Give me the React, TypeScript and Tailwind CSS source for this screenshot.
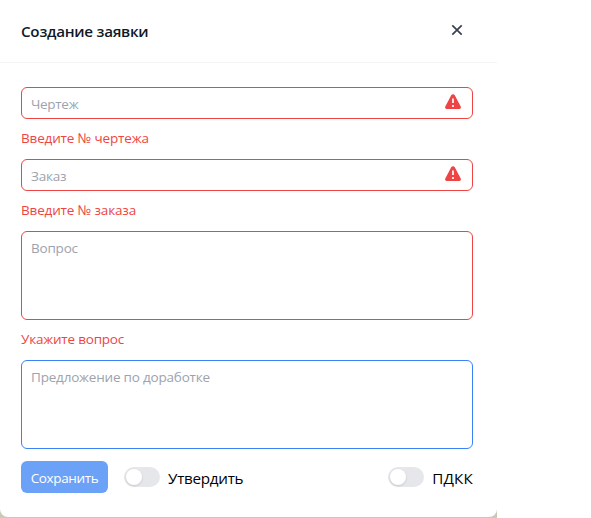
import type { ReactNode } from "react";

function Warning() {
  return (
    <svg viewBox="0 0 16 15" className="mr-[11px] mb-[3px] h-[15px] w-4 shrink-0" aria-hidden="true">
      <path
        d="M6.2 1.2a2.050 2.050 0 0 1 3.600 0l5.900 11.200c.65 1.2-.15 2.600-1.4 2.600H1.7C.45 15-.35 13.6.3 12.4z"
        fill="#ef4444"
      />
      <path d="M8 4.500v4.500M8 11v2" stroke="#fff" strokeOpacity="0.85" strokeWidth="2" />
    </svg>
  );
}

function Field({ label, error, tracking }: { label: string; error: string; tracking: string }) {
  return (
    <div className="h-[72px]">
      <div className="flex h-8 items-center justify-between rounded-md border border-[#ef4444] pl-[9px]">
        <span className={`mt-[2px] text-[13.5px] leading-5 text-[#9ca3af] ${tracking}`}>{label}</span>
        <Warning />
      </div>
      <p className="mt-[9px] text-[13.5px] leading-5 tracking-[-0.16px] text-[#ef4444]">{error}</p>
    </div>
  );
}

function Area({ className, children }: { className: string; children: ReactNode }) {
  return (
    <div className={`h-[89px] rounded-md border pt-[6px] pl-[9px] text-[13.5px] leading-5 text-[#9ca3af] ${className}`}>
      {children}
    </div>
  );
}

function Toggle({ label, className }: { label: string; className: string }) {
  return (
    <div className="flex items-center">
      <div className="flex h-5 w-9 items-center rounded-full bg-[#e5e7eb] pl-0.5">
        <div className="size-4 rounded-full bg-white shadow-sm" />
      </div>
      <span className={`mt-px ml-2 leading-6 whitespace-nowrap text-black ${className}`}>{label}</span>
    </div>
  );
}

export default function App() {
  return (
    <main className="h-[518px] w-[591px] overflow-hidden bg-white font-['Open_Sans','Noto_Sans',sans-serif]">
      <div className="h-[518px] w-[497px] rounded-tr-md bg-[#c9c8b9]">
        <section className="h-[517px] rounded-b-lg bg-white">
          <header className="flex h-[63px] items-center justify-between border-b border-[#f3f4f6] pr-[34px] pl-[21px]">
            <h1 className="text-[15.2px] leading-6 font-semibold tracking-[-0.26px] whitespace-nowrap text-[#111827]">
              Создание заявки
            </h1>
            <svg viewBox="0 0 12 12" className="mb-[2px] size-3" aria-hidden="true">
              <path d="M1.300 1.300l9.400 9.400m0-9.400l-9.400 9.400" stroke="#374151" strokeWidth="1.700" />
            </svg>
          </header>
          <div className="pt-6 pr-6 pl-[21px]">
            <Field label="Чертеж" error="Введите № чертежа" tracking="tracking-[-0.3px]" />
            <Field label="Заказ" error="Введите № заказа" tracking="tracking-[-0.2px]" />
            <Area className="border-[#ef4444] tracking-[-0.2px]">Вопрос</Area>
            <p className="mt-[9px] mb-[11px] text-[13.5px] leading-5 tracking-[-0.2px] text-[#ef4444]">Укажите вопрос</p>
            <Area className="border-[#3b82f6] tracking-[-0.2px]">Предложение по доработке</Area>
            <footer className="mt-3 flex h-8 items-center">
              <button className="h-8 w-[87px] rounded-md bg-[#6ca1f8] pt-[2px] text-[13.5px] tracking-[-0.35px] whitespace-nowrap text-white">
                Сохранить
              </button>
              <div className="ml-4 flex flex-1 justify-between">
                <Toggle label="Утвердить" className="text-[15.2px] tracking-[-0.25px]" />
                <Toggle label="ПДКК" className="text-[15.2px] tracking-[0.2px]" />
              </div>
            </footer>
          </div>
        </section>
      </div>
    </main>
  );
}
